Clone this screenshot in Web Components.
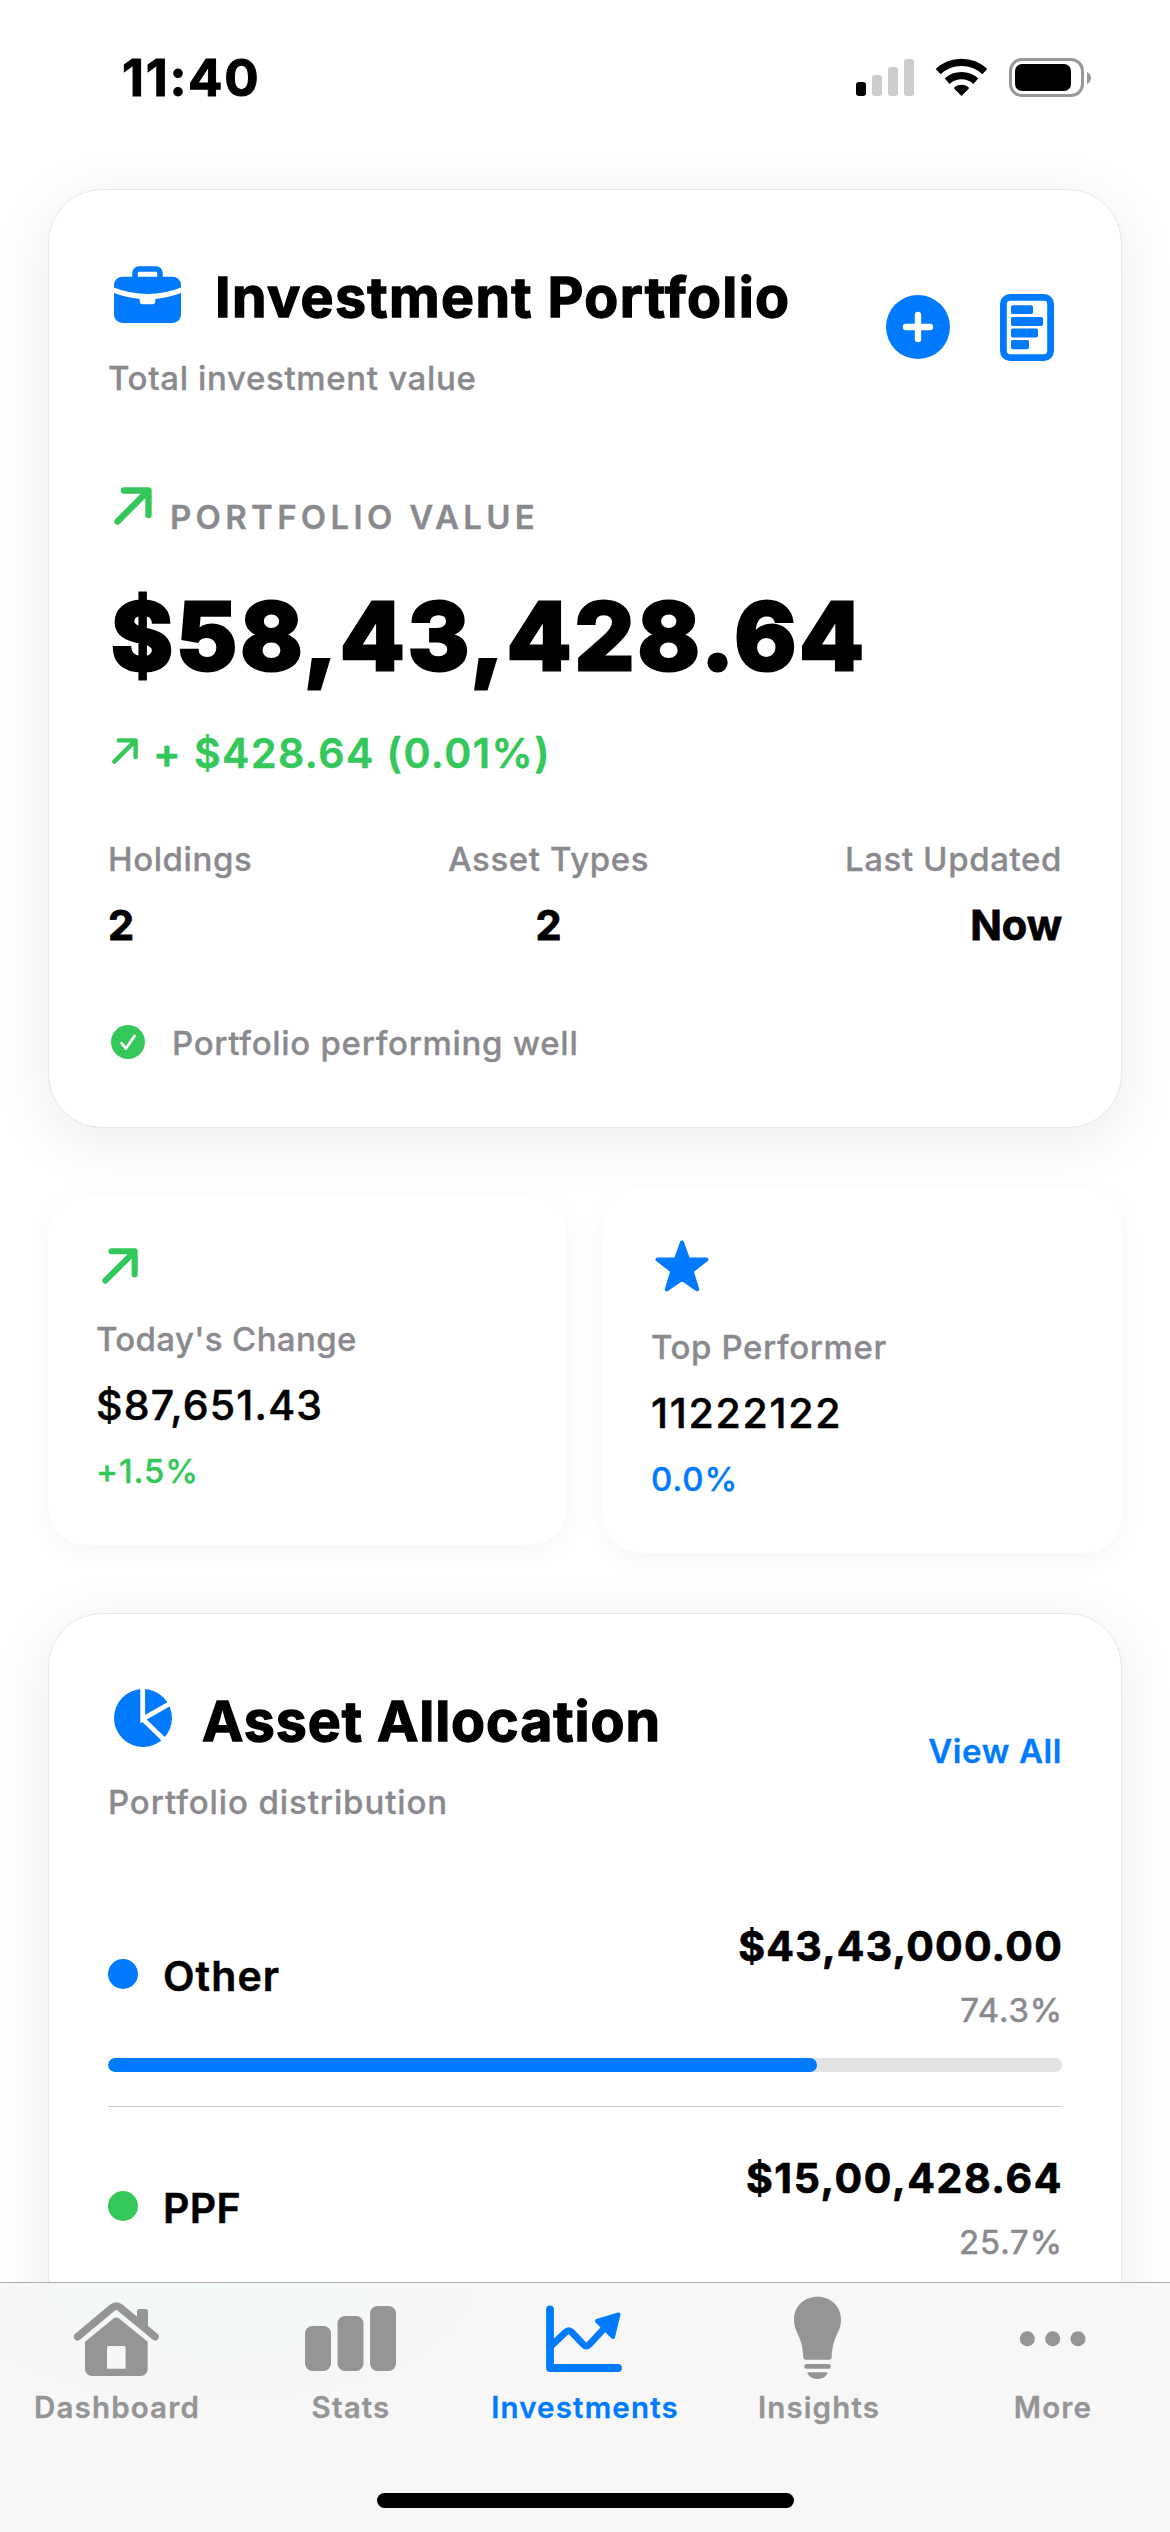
<!DOCTYPE html>
<html lang="en">
<head>
<meta charset="UTF-8">
<meta name="viewport" content="width=device-width, initial-scale=1.0">
<title>Investment Portfolio</title>
<style>
    :root {
        --blue: #007aff;
        --green: #34c759;
        --muted: #8a8a8e;
        --tab-muted: #959595;
    }

    body {
        margin: 0;
        width: 1170px;
        height: 2532px;
        overflow: hidden;
        background: #fff;
        color: #000;
        font-family: Inter, "Liberation Sans", sans-serif;
        font-size: 33px;
        -webkit-text-stroke: 0.3px currentColor;
    }
</style>
</head>
<body>
<app-screen>
    <status-bar slot="status" time="11:40"></status-bar>

    <surface-card>
        <card-header icon="briefcase" heading="Investment Portfolio" subtitle="Total investment value" style="--heading-spacing: 1.35px; --heading-gap: 34px">
            <app-icon name="plus"></app-icon>
            <app-icon name="document" style="margin-right: 8px"></app-icon>
        </card-header>
        <portfolio-summary label="PORTFOLIO VALUE" amount="$58,43,428.64" change="+ $428.64 (0.01%)">
            <stat-item label="Holdings" value="2"></stat-item>
            <stat-item label="Asset Types" value="2" align="center"></stat-item>
            <stat-item label="Last Updated" value="Now" align="flex-end"></stat-item>
            <span slot="note">Portfolio performing well</span>
        </portfolio-summary>
    </surface-card>

    <metric-row>
        <metric-card icon="arrow" size="36" label="Today's Change" value="$87,651.43" change="+1.5%" style="--accent: var(--green); --icon-inset: 6px; --value-spacing: 1.2px; --label-spacing: 0.35px"></metric-card>
        <metric-card icon="star" label="Top Performer" value="11222122" change="0.0%" style="--accent: var(--blue); --icon-inset: 4px; --value-spacing: 1.75px"></metric-card>
    </metric-row>

    <surface-card>
        <card-header icon="pie" heading="Asset Allocation" subtitle="Portfolio distribution" style="--heading-spacing: 0.9px; --subtitle-spacing: 0.9px">
            <span>View All</span>
        </card-header>
        <allocation-row name="Other" amount="$43,43,000.00" percent="74.3%" style="--accent: var(--blue); --name-spacing: 1.1px; --amount-spacing: 1.2px"></allocation-row>
        <allocation-row name="PPF" amount="$15,00,428.64" percent="25.7%" style="--accent: var(--green); --name-spacing: 0.3px; --amount-spacing: 1.6px"></allocation-row>
    </surface-card>

    <tab-bar slot="tabs">
        <tab-item icon="house" label="Dashboard"></tab-item>
        <tab-item icon="bars" label="Stats"></tab-item>
        <tab-item icon="chart" label="Investments" active></tab-item>
        <tab-item icon="bulb" label="Insights"></tab-item>
        <tab-item icon="dots" label="More"></tab-item>
    </tab-bar>
</app-screen>

<script>
// width, height, markup
const ICONS = {
    briefcase: [67, 57, `
        <path d="M21 12V7a4 4 0 0 1 4-4h17a4 4 0 0 1 4 4v5" fill="none" stroke="currentColor" stroke-width="5.6"/>
        <path d="M0 21.5V19a8.5 8.5 0 0 1 8.5-8.3h50A8.5 8.5 0 0 1 67 19v2.5Q51 28 33.5 28T0 21.5z"/>
        <path d="M0 27Q12 31.5 25.7 33v2.3a3 3 0 0 0 3 3h9.6a3 3 0 0 0 3-3V33Q55 31.5 67 27v21.5a8.5 8.5 0 0 1-8.5 8.5h-50A8.5 8.5 0 0 1 0 48.5z"/>`],
    plus: [64, 64, `
        <circle cx="32" cy="32" r="32"/>
        <path d="M32 20v24M20 32h24" stroke="#fff" stroke-width="6.4" stroke-linecap="round"/>`],
    document: [54, 67, `
        <rect x="3.4" y="3.4" width="47.2" height="60.2" rx="6.5" fill="none" stroke="currentColor" stroke-width="6.8"/>
        <rect x="11" y="11.3" width="22" height="8.8" rx="1.8"/>
        <rect x="11" y="23" width="32" height="9" rx="1.8"/>
        <rect x="11" y="34.6" width="27" height="9" rx="1.8"/>
        <rect x="11" y="46" width="18" height="9.2" rx="1.8"/>`],
    arrow: [38, 38, `
        <path d="M3.5 34.5L34 4M10 3.5h24.5v24.5" fill="none" stroke="currentColor" stroke-width="6.4" stroke-linecap="round" stroke-linejoin="round"/>`],
    check: [34, 34, `
        <circle cx="17" cy="17" r="17"/>
        <path d="M10.5 18.2L15 23.5L23.5 11" fill="none" stroke="#fff" stroke-width="2.8" stroke-linecap="round" stroke-linejoin="round"/>`],
    star: [54, 52, `
        <path d="M27 2.5L33 19.2L51.5 19.5L36.7 31L42.2 49.3L27 38.8L11.8 49.3L17.3 31L2.5 19.5L21 19.2z" stroke="currentColor" stroke-width="4" stroke-linejoin="round"/>`],
    pie: [58, 58, `
        <circle cx="29" cy="29" r="29"/>
        <path d="M28.7-1V30L58 13.3M28.7 30L51.5 52" fill="none" stroke="#fff" stroke-width="4.8"/>`],
    house: [100, 106, `
        <path d="M10.7 53.7L45 25Q49.3 21.3 53.6 25L88 53.7" fill="none" stroke="currentColor" stroke-width="7.6" stroke-linecap="round" stroke-linejoin="round"/>
        <path d="M70 40V28.5a2.5 2.5 0 0 1 2.5-2.5h6a2.5 2.5 0 0 1 2.5 2.5V49z"/>
        <path fill-rule="evenodd" d="M18 58.7L46.5 35.5Q49.3 33.3 52.1 35.5L80.7 58.7V86a7 7 0 0 1-7 7H25a7 7 0 0 1-7-7zM40 65v20.7h18.6V65a2 2 0 0 0-2-2H42a2 2 0 0 0-2 2z"/>`],
    bars: [100, 106, `
        <rect x="4" y="43" width="26" height="45" rx="7.5"/>
        <rect x="36.5" y="33" width="26" height="55" rx="7.5"/>
        <rect x="69" y="23" width="26" height="65" rx="7.5"/>`],
    chart: [100, 106, `
        <path d="M15 26.5V85H83" fill="none" stroke="currentColor" stroke-width="7.8" stroke-linecap="round" stroke-linejoin="round"/>
        <path d="M15 64L30.5 49.3Q33.7 46 36.9 49.3L48.3 61.3Q51.4 64.7 54.5 61.3L71 43.5" fill="none" stroke="currentColor" stroke-width="6.8"/>
        <path d="M83.5 31.5L78 54L62 38z" stroke="currentColor" stroke-width="4" stroke-linejoin="round"/>`],
    bulb: [100, 106, `
        <path d="M48.5 13.7C61.5 13.7 72 23 72 36.5C72 50 63.7 52 62.7 74Q62.6 76.7 60 76.7H37Q34.4 76.7 34.3 74C33.3 52 25 50 25 36.5C25 23 35.5 13.7 48.5 13.7z"/>
        <rect x="35.2" y="81" width="26.6" height="4.8" rx="2.4"/>
        <path d="M38.3 89.3h20.4C57.5 93.5 54 96 48.5 96S39.5 93.5 38.3 89.3z"/>`],
    dots: [100, 106, `
        <circle cx="24.3" cy="55.7" r="7.5"/>
        <circle cx="49.7" cy="55.7" r="7.5"/>
        <circle cx="75" cy="55.7" r="7.5"/>`]
};

class AppIcon extends HTMLElement {
    connectedCallback() {
        const [w, h, markup] = ICONS[this.getAttribute('name')];
        const width = Number(this.getAttribute('size')) || w;
        const height = width * h / w;
        this.attachShadow({ mode: 'open' });
        this.shadowRoot.innerHTML = `
            <style>
                :host { display: block; flex: none; }
                svg { display: block; fill: currentColor; }
            </style>
            <svg width="${width}" height="${height}" viewBox="0 0 ${w} ${h}">${markup}</svg>
        `;
    }
}

class AppScreen extends HTMLElement {
    connectedCallback() {
        this.attachShadow({ mode: 'open' });
        this.shadowRoot.innerHTML = `
            <style>
                :host {
                    display: block;
                    position: relative;
                    height: 2532px;
                    overflow: hidden;
                }
                main {
                    display: flex;
                    flex-direction: column;
                    gap: 60px;
                    padding: 0 48px;
                }
                /* The tab bar floats over the scrolled content */
                footer {
                    position: absolute;
                    left: 0;
                    right: 0;
                    bottom: 0;
                }
            </style>
            <slot name="status"></slot>
            <main><slot></slot></main>
            <footer><slot name="tabs"></slot></footer>
        `;
    }
}

class StatusBar extends HTMLElement {
    connectedCallback() {
        this.attachShadow({ mode: 'open' });
        this.shadowRoot.innerHTML = `
            <style>
                :host {
                    display: flex;
                    justify-content: space-between;
                    align-items: center;
                    box-sizing: border-box;
                    height: 189px;
                    padding: 0 78px 34px 122px;
                }
                .time {
                    font-size: 51px;
                    font-weight: 700;
                    line-height: 60px;
                    letter-spacing: 1.7px;
                    -webkit-text-stroke: 1px currentColor;
                }
                svg { display: block; }
            </style>
            <span class="time">${this.getAttribute('time')}</span>
            <svg width="236" height="39" viewBox="856 58 236 39">
                <rect x="856" y="82" width="10" height="14" rx="3"/>
                <g fill="#ccc">
                    <rect x="872" y="75" width="10" height="21" rx="3"/>
                    <rect x="888" y="67" width="10" height="29" rx="3"/>
                    <rect x="904" y="59" width="10" height="37" rx="3"/>
                </g>
                <g fill="none" stroke="#000" stroke-width="7.3">
                    <path d="M938.2 71.7A34 34 0 0 1 984.8 71.7"/>
                    <path d="M947.2 81.2A21.3 21.3 0 0 1 975.8 81.2"/>
                </g>
                <path d="M961.5 96L954.5 89Q953.5 88 954.7 87A11 11 0 0 1 968.3 87Q969.5 88 968.5 89z"/>
                <rect x="1010.5" y="59.5" width="72" height="36" rx="11.5" fill="none" stroke="#999" stroke-width="3"/>
                <rect x="1015" y="64" width="56" height="27" rx="7"/>
                <path d="M1087 72Q1091 74 1091 78T1087 84z" fill="#999"/>
            </svg>
        `;
    }
}

class SurfaceCard extends HTMLElement {
    connectedCallback() {
        this.attachShadow({ mode: 'open' });
        this.shadowRoot.innerHTML = `
            <style>
                :host {
                    display: block;
                    padding: 66px 59px 64px;
                    border: 1px solid #e8e8e8;
                    border-radius: 54px;
                    background: #fff;
                    box-shadow: 0 12px 60px rgba(0, 0, 0, 0.08);
                }
            </style>
            <slot></slot>
        `;
    }
}

class CardHeader extends HTMLElement {
    connectedCallback() {
        this.attachShadow({ mode: 'open' });
        this.shadowRoot.innerHTML = `
            <style>
                :host {
                    display: flex;
                    justify-content: space-between;
                    align-items: center;
                }
                .heading {
                    display: flex;
                    align-items: center;
                    gap: var(--heading-gap, 30px);
                    height: 82px;
                    font-size: 55.5px;
                    font-weight: 700;
                    line-height: 72px;
                    letter-spacing: var(--heading-spacing);
                    white-space: nowrap;
                    -webkit-text-stroke: 1.3px currentColor;
                }
                .heading app-icon {
                    margin-left: 6px;
                    padding-bottom: 6px;
                    color: var(--blue);
                }
                .subtitle {
                    margin-top: 20px;
                    color: var(--muted);
                    font-weight: 500;
                    line-height: 40px;
                    letter-spacing: var(--subtitle-spacing, 0.65px);
                }
                .actions {
                    display: flex;
                    align-items: center;
                    gap: 50px;
                    color: var(--blue);
                    font-weight: 600;
                    line-height: 40px;
                    letter-spacing: 0.6px;
                }
            </style>
            <div>
                <div class="heading">
                    <app-icon name="${this.getAttribute('icon')}"></app-icon>
                    <span>${this.getAttribute('heading')}</span>
                </div>
                <div class="subtitle">${this.getAttribute('subtitle')}</div>
            </div>
            <div class="actions"><slot></slot></div>
        `;
    }
}

class PortfolioSummary extends HTMLElement {
    connectedCallback() {
        this.attachShadow({ mode: 'open' });
        this.shadowRoot.innerHTML = `
            <style>
                :host { display: block; }
                .row { display: flex; }
                .label {
                    align-items: flex-end;
                    height: 50px;
                    margin-top: 89px;
                    gap: 18px;
                    color: var(--muted);
                    font-weight: 600;
                    line-height: 40px;
                    letter-spacing: 4.3px;
                }
                .label app-icon { margin: 0 0 12px 6px; color: var(--green); }
                .amount {
                    margin-top: 41px;
                    padding-left: 3px;
                    font-size: 94px;
                    font-weight: 800;
                    line-height: 116px;
                    letter-spacing: 3px;
                    -webkit-text-stroke: 3px currentColor;
                }
                .change {
                    align-items: center;
                    gap: 15px;
                    margin-top: 34px;
                    color: var(--green);
                    font-size: 41px;
                    font-weight: 600;
                    line-height: 50px;
                    letter-spacing: 1.5px;
                    -webkit-text-stroke: 0.5px currentColor;
                }
                .change app-icon { margin: 0 0 4px 4px; }
                .stats { justify-content: space-between; margin-top: 61px; }
                .note {
                    align-items: center;
                    gap: 27px;
                    margin-top: 73px;
                    color: var(--muted);
                    font-weight: 500;
                    line-height: 40px;
                    letter-spacing: 0.7px;
                }
                .note app-icon { margin: 0 0 2px 3px; color: var(--green); }
            </style>
            <div class="row label">
                <app-icon name="arrow"></app-icon>
                <span>${this.getAttribute('label')}</span>
            </div>
            <div class="amount">${this.getAttribute('amount')}</div>
            <div class="row change">
                <app-icon name="arrow" size="26"></app-icon>
                <span>${this.getAttribute('change')}</span>
            </div>
            <div class="row stats"><slot></slot></div>
            <div class="row note">
                <app-icon name="check"></app-icon>
                <slot name="note"></slot>
            </div>
        `;
    }
}

class StatItem extends HTMLElement {
    connectedCallback() {
        this.attachShadow({ mode: 'open' });
        this.shadowRoot.innerHTML = `
            <style>
                :host {
                    display: flex;
                    flex-direction: column;
                    align-items: ${this.getAttribute('align') || 'flex-start'};
                    gap: 21px;
                }
                .label {
                    color: var(--muted);
                    font-weight: 500;
                    line-height: 40px;
                    letter-spacing: 0.6px;
                }
                .value {
                    font-size: 41.5px;
                    font-weight: 700;
                    line-height: 50px;
                    -webkit-text-stroke: 0.8px currentColor;
                }
            </style>
            <span class="label">${this.getAttribute('label')}</span>
            <span class="value">${this.getAttribute('value')}</span>
        `;
    }
}

class MetricRow extends HTMLElement {
    connectedCallback() {
        this.attachShadow({ mode: 'open' });
        this.shadowRoot.innerHTML = `
            <style>
                :host {
                    display: grid;
                    grid-template-columns: 1fr 1fr;
                    align-items: center;
                    gap: 36px;
                    height: 365px;
                }
            </style>
            <slot></slot>
        `;
    }
}

class MetricCard extends HTMLElement {
    connectedCallback() {
        this.attachShadow({ mode: 'open' });
        this.shadowRoot.innerHTML = `
            <style>
                :host {
                    display: block;
                    padding: 52px 48px 54px;
                    border-radius: 38px;
                    background: #fff;
                    box-shadow: 0 6px 24px rgba(0, 0, 0, 0.04);
                }
                app-icon {
                    margin: 0 0 35px var(--icon-inset);
                    color: var(--accent);
                }
                .label {
                    color: var(--muted);
                    font-weight: 500;
                    line-height: 40px;
                    letter-spacing: var(--label-spacing, 0.6px);
                }
                .value {
                    margin: 21px 0;
                    font-size: 41px;
                    font-weight: 500;
                    line-height: 50px;
                    letter-spacing: var(--value-spacing);
                    -webkit-text-stroke: 0.5px currentColor;
                }
                .change {
                    color: var(--accent);
                    font-weight: 500;
                    line-height: 40px;
                    letter-spacing: 0.9px;
                }
            </style>
            <app-icon name="${this.getAttribute('icon')}" size="${this.getAttribute('size') || ''}"></app-icon>
            <div class="label">${this.getAttribute('label')}</div>
            <div class="value">${this.getAttribute('value')}</div>
            <div class="change">${this.getAttribute('change')}</div>
        `;
    }
}

class AllocationRow extends HTMLElement {
    connectedCallback() {
        const percent = this.getAttribute('percent');
        this.attachShadow({ mode: 'open' });
        this.shadowRoot.innerHTML = `
            <style>
                :host {
                    display: block;
                    padding: 46px 0 34px;
                    border-bottom: 1px solid #c6c6c8;
                }
                :host(:first-of-type) { margin-top: 53px; }
                .info {
                    display: flex;
                    justify-content: space-between;
                    align-items: center;
                }
                .name {
                    display: flex;
                    align-items: center;
                    gap: 25px;
                    font-size: 41px;
                    font-weight: 600;
                    line-height: 50px;
                    letter-spacing: var(--name-spacing);
                    -webkit-text-stroke: 0.5px currentColor;
                }
                .dot {
                    width: 30px;
                    height: 30px;
                    margin-bottom: 4px;
                    border-radius: 50%;
                    background: var(--accent);
                }
                .figures {
                    display: flex;
                    flex-direction: column;
                    align-items: flex-end;
                    gap: 19px;
                }
                .amount {
                    margin-right: -1px;
                    font-size: 41px;
                    font-weight: 700;
                    line-height: 50px;
                    letter-spacing: var(--amount-spacing);
                    -webkit-text-stroke: 0.7px currentColor;
                }
                .percent {
                    margin-right: -1px;
                    color: var(--muted);
                    font-weight: 400;
                    line-height: 40px;
                    letter-spacing: 0.9px;
                    -webkit-text-stroke: 0.6px currentColor;
                }
                .track {
                    height: 14px;
                    margin-top: 28px;
                    border-radius: 7px;
                    background: #e3e3e4;
                    overflow: hidden;
                }
                .fill {
                    width: ${percent};
                    height: 100%;
                    border-radius: 7px;
                    background: var(--accent);
                }
            </style>
            <div class="info">
                <div class="name"><span class="dot"></span><span>${this.getAttribute('name')}</span></div>
                <div class="figures">
                    <span class="amount">${this.getAttribute('amount')}</span>
                    <span class="percent">${percent}</span>
                </div>
            </div>
            <div class="track"><div class="fill"></div></div>
        `;
    }
}

class TabBar extends HTMLElement {
    connectedCallback() {
        this.attachShadow({ mode: 'open' });
        this.shadowRoot.innerHTML = `
            <style>
                :host {
                    display: flex;
                    flex-direction: column;
                    justify-content: space-between;
                    align-items: center;
                    box-sizing: border-box;
                    height: 250px;
                    padding-bottom: 24px;
                    border-top: 1px solid #adadad;
                    background: radial-gradient(ellipse 330px 150px at 210px 0, #f2f8f4, #f7f7f7);
                }
                nav {
                    display: grid;
                    grid-template-columns: repeat(5, 1fr);
                    width: 100%;
                }
                .home-indicator {
                    width: 417px;
                    height: 15px;
                    border-radius: 8px;
                    background: #000;
                }
            </style>
            <nav><slot></slot></nav>
            <div class="home-indicator"></div>
        `;
    }
}

class TabItem extends HTMLElement {
    connectedCallback() {
        this.attachShadow({ mode: 'open' });
        this.shadowRoot.innerHTML = `
            <style>
                :host {
                    display: flex;
                    flex-direction: column;
                    align-items: center;
                    color: var(--tab-muted);
                    font-size: 29.5px;
                    font-weight: 600;
                    line-height: 36px;
                    letter-spacing: 1.15px;
                }
                :host([active]) { color: var(--blue); }
            </style>
            <app-icon name="${this.getAttribute('icon')}"></app-icon>
            <span>${this.getAttribute('label')}</span>
        `;
    }
}

customElements.define('app-icon', AppIcon);
customElements.define('app-screen', AppScreen);
customElements.define('status-bar', StatusBar);
customElements.define('surface-card', SurfaceCard);
customElements.define('card-header', CardHeader);
customElements.define('portfolio-summary', PortfolioSummary);
customElements.define('stat-item', StatItem);
customElements.define('metric-row', MetricRow);
customElements.define('metric-card', MetricCard);
customElements.define('allocation-row', AllocationRow);
customElements.define('tab-bar', TabBar);
customElements.define('tab-item', TabItem);
</script>
</body>
</html>
